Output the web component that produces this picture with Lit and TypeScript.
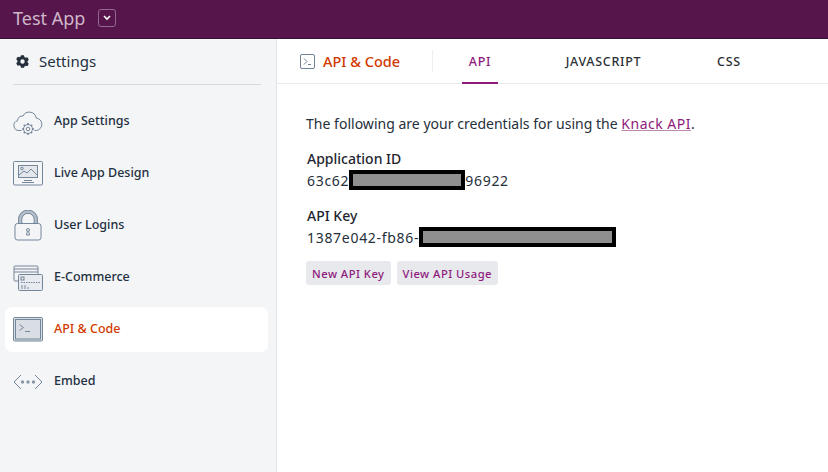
import { LitElement, html, css, svg } from "lit";
import { customElement } from "lit/decorators.js";

const stroke = "#74869a";
const icons: Record<string, unknown> = {
  cloud: svg`<svg width="30" height="26" viewBox="0 0 30 26" fill="none" stroke="${stroke}" stroke-width="1"><path d="M8.500 21.500H6a5 5 0 0 1-1.500-9.800A4.800 4.800 0 0 1 10 7 7 7 0 0 1 23.200 9a6.300 6.300 0 0 1 .3 12.500H21.500"/><circle cx="15" cy="20" r="4.500"/><circle cx="15" cy="20" r="1.800"/><path d="M15 14v1.500M15 24.500V26M9 20h1.500M19.500 20H21M10.800 15.800l1 1M18.200 23.200l1 1M10.800 24.200l1-1M18.200 16.800l1-1" stroke-width="1.500"/></svg>`,
  design: svg`<svg width="30" height="25" viewBox="0 0 30 25" fill="none" stroke="${stroke}"><rect x=".5" y=".5" width="29" height="23.500" rx="1"/><rect x="5.500" y="4.500" width="19" height="12" fill="#e3e7ec"/><circle cx="9" cy="7.500" r="1.300"/><path d="M6 14l5-4 3 2 4-4 6 6"/><path d="M11 19.500h8M9 21.500h12"/></svg>`,
  lock: svg`<svg width="28" height="31" viewBox="0 0 28 31" fill="none" stroke="${stroke}"><path d="M6 14V9.500a8 8 0 0 1 16 0V14" stroke-width="3.500" stroke="#b4bec9"/><path d="M4.500 14V9.500a9.500 9.500 0 0 1 19 0V14M7.800 14V9.500a6.200 6.200 0 0 1 12.400 0V14"/><rect x="1" y="13.500" width="26" height="16.500" rx="2.500" fill="#f4f5f7"/><circle cx="14" cy="20" r="1.500"/><path d="M13.300 21.500l-.8 3.500h3l-.8-3.500"/></svg>`,
  cards: svg`<svg width="30" height="26" viewBox="0 0 30 26" fill="none" stroke="${stroke}"><path d="M5 16H2a1 1 0 0 1-1-1V2a1 1 0 0 1 1-1h22a1 1 0 0 1 1 1v7"/><path d="M1 4h24M1 7h24" stroke-width="1.200"/><rect x="5.500" y="9.500" width="24" height="16" rx="1" fill="#e8ebef"/><rect x="8" y="12" width="3" height="3"/><path d="M8 17.500h19" stroke-dasharray="1.500 1"/><path d="M8 21h5M8 23h9" stroke-dasharray="2 1"/></svg>`,
  term: svg`<svg width="30" height="25" viewBox="0 0 30 25" fill="#d9dee4" stroke="${stroke}"><rect x=".5" y=".5" width="29" height="23.500" rx="1"/><rect x="2.500" y="2.500" width="25" height="19.500" fill="#d9dee4"/><path d="M6.500 7.500l4 3-4 3M12 14.500h5" fill="none"/></svg>`,
  embed: svg`<svg width="30" height="16" viewBox="0 0 30 16" fill="none" stroke="${stroke}"><path d="M8 1L1 8l7 7M22 1l7 7-7 7"/><g fill="#8998a8" stroke="none"><circle cx="9.500" cy="8" r="1.700"/><circle cx="15" cy="8" r="1.700"/><circle cx="20.500" cy="8" r="1.700"/></g></svg>`,
};

const NAV = [
  { key: "cloud", label: "App Settings" },
  { key: "design", label: "Live App Design" },
  { key: "lock", label: "User Logins" },
  { key: "cards", label: "E-Commerce" },
  { key: "term", label: "API & Code", active: true },
  { key: "embed", label: "Embed" },
];

@customElement("app-root")
export class AppRoot extends LitElement {
  static styles = css`
    :host {
      display: flex;
      flex-direction: column;
      width: 828px;
      height: 472px;
      overflow: hidden;
      background: #fff;
      font-family: "Noto Sans", "Open Sans", sans-serif;
      color: #1f2d3d;
    }
    .top {
      flex: none;
      height: 39px;
      box-sizing: border-box;
      background: #56164b;
      border-bottom: 1px solid #3a1030;
      display: flex;
      align-items: center;
      padding: 0 0 3px 13px;
      gap: 13px;
      color: #cfb7ca;
      font-size: 18px;
    }
    .drop {
      width: 18px;
      height: 18px;
      box-sizing: border-box;
      border: 1px solid #94688c;
      border-radius: 3px;
      display: flex;
      align-items: center;
      justify-content: center;
    }
    .body {
      flex: 1;
      display: flex;
      min-height: 0;
    }
    .side {
      flex: none;
      width: 277px;
      box-sizing: border-box;
      background: #f4f5f7;
      border-right: 1px solid #dfe5e6;
      padding: 0 15px 0 5px;
    }
    .side-head {
      margin-left: 8px;
      height: 46px;
      box-sizing: border-box;
      border-bottom: 1px solid #d5d9df;
      display: flex;
      align-items: center;
      gap: 10px;
      padding: 0 0 1px 3px;
      font-size: 15px;
      color: #22303f;
    }
    .nav {
      display: flex;
      flex-direction: column;
      gap: 7px;
      margin-top: 14px;
    }
    .item {
      height: 45px;
      width: 263px;
      border-radius: 7px;
      display: flex;
      align-items: center;
      padding-left: 7px;
      box-sizing: border-box;
      font-size: 12.500px;
      color: #22303f;
      font-weight: 500;
    }
    .item.active {
      background: #fff;
      color: #d13a00;
    }
    .ico {
      width: 31px;
      display: flex;
      justify-content: center;
      margin-right: 11px;
    }
    .lbl {
      padding-bottom: 2px;
    }
    .main {
      flex: 1;
      min-width: 0;
      display: flex;
      flex-direction: column;
    }
    .tabs {
      flex: none;
      height: 45px;
      box-sizing: border-box;
      border-bottom: 1px solid #e8eaed;
      display: flex;
      align-items: center;
      padding-left: 23px;
    }
    .title {
      display: flex;
      align-items: center;
      gap: 8px;
      color: #d13a00;
      font-size: 14.500px;
      font-weight: 500;
      width: 132px;
      height: 22px;
      border-right: 1px solid #eceef0;
      white-space: nowrap;
    }
    .tab {
      align-self: stretch;
      display: flex;
      align-items: center;
      font-size: 12.500px;
      letter-spacing: 0.7px;
      color: #2b2f36;
      box-sizing: border-box;
      border-bottom: 2px solid transparent;
      margin-bottom: -1px;
      padding-top: 2px;
      justify-content: center;
      font-weight: 500;
    }
    .tab.a {
      margin-left: 29px;
      width: 36px;
      color: #8e1a7c;
      border-bottom-color: #8e1a7c;
    }
    .tab.b {
      margin-left: 67px;
      width: 77px;
    }
    .tab.c {
      margin-left: 75px;
      width: 24px;
    }
    .content {
      padding: 30px 0 0 29px;
      font-size: 14px;
      color: #262f3a;
    }
    .intro {
      line-height: 20px;
      margin-bottom: 15px;
      letter-spacing: 0.02px;
    }
    .intro a {
      color: #8e1a7c;
      letter-spacing: 0.5px;
      text-decoration: underline;
      text-decoration-color: #b98bb0;
    }
    .label {
      font-weight: 500;
      line-height: 20px;
      color: #1f2630;
      padding-left: 1px;
    }
    .val {
      margin-bottom: 15px;
      padding-left: 1px;
      display: flex;
      align-items: center;
      height: 22px;
      letter-spacing: 0.7px;
    }
    .redact {
      box-sizing: border-box;
      height: 20px;
      background: #8f8f8f;
      border: 4px solid #000;
    }
    .r1 {
      width: 116px;
    }
    .r2 {
      width: 197px;
    }
    .btns {
      display: flex;
      gap: 6px;
      margin-top: -2px;
    }
    .btn {
      height: 24px;
      display: flex;
      align-items: center;
      padding: 0 6px;
      background: #e7e9ec;
      border-radius: 3px;
      color: #8e1a7c;
      font-size: 11.200px;
      letter-spacing: 0.5px;
      font-weight: 500;
    }
  `;

  render() {
    return html`
      <div class="top">
        <span>Test App</span>
        <span class="drop">
          <svg width="8" height="6" viewBox="0 0 8 6" fill="none" stroke="#fff" stroke-width="1.600"><path d="M1 1l3 3 3-3" /></svg>
        </span>
      </div>
      <div class="body">
        <aside class="side">
          <div class="side-head">
            <svg width="13" height="13" viewBox="0 0 13 13"><path fill="#26303c" fill-rule="evenodd" d="M5 .3h3l.4 1.700 1.300.8 1.700-.5 1.400 2.500-1.200 1.200v1.500l1.200 1.200-1.400 2.500-1.700-.5-1.300.8L8 12.700H5l-.4-1.700-1.300-.8-1.700.5L.2 8.200 1.400 7V5.500L.2 4.300 1.600 1.800l1.700.5 1.300-.8zM6.500 4.300a2.200 2.200 0 1 0 0 4.400 2.200 2.200 0 0 0 0-4.400z"/></svg>
            <span>Settings</span>
          </div>
          <nav class="nav">
            ${NAV.map(
              (n) => html`<div class="item ${n.active ? "active" : ""}">
                <span class="ico">${icons[n.key]}</span><span class="lbl">${n.label}</span>
              </div>`
            )}
          </nav>
        </aside>
        <main class="main">
          <div class="tabs">
            <div class="title">
              <svg width="15" height="15" viewBox="0 0 15 15" fill="none" stroke="#6f8296"><rect x=".5" y=".5" width="14" height="14" rx="1.500"/><path d="M4 4.500l3 3-3 3M8 10.500h3"/></svg>
              <span>API &amp; Code</span>
            </div>
            <div class="tab a">API</div>
            <div class="tab b">JAVASCRIPT</div>
            <div class="tab c">CSS</div>
          </div>
          <div class="content">
            <div class="intro">The following are your credentials for using the <a>Knack API</a>.</div>
            <div class="label">Application ID</div>
            <div class="val"><span>63c62</span><span class="redact r1"></span><span>96922</span></div>
            <div class="label">API Key</div>
            <div class="val"><span>1387e042-fb86-</span><span class="redact r2"></span></div>
            <div class="btns"><span class="btn">New API Key</span><span class="btn">View API Usage</span></div>
          </div>
        </main>
      </div>
    `;
  }
}
